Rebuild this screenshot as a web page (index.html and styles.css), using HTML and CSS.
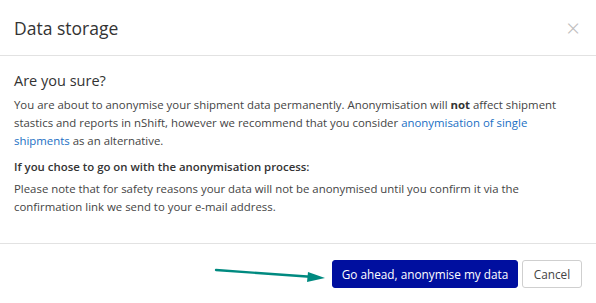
FILE: index.html
```html
<!DOCTYPE html>
<html>
<head>
<meta charset="utf-8">
<link rel="stylesheet" href="styles.css">
</head>
<body>
<div class="modal">
  <div class="modal-header">
    <h1 class="modal-title">Data storage</h1>
    <span class="close">&times;</span>
  </div>
  <div class="modal-body">
    <h2 class="subtitle">Are you sure?</h2>
    <p class="text">You are about to anonymise your shipment data permanently. Anonymisation will <b>not</b> affect shipment stastics and reports in nShift, however we recommend that you consider <a class="link">anonymisation of single shipments</a> as an alternative.</p>
    <p class="text-bold">If you chose to go on with the anonymisation process:</p>
    <p class="text">Please note that for safety reasons your data will not be anonymised until you confirm it via the confirmation link we send to your e-mail address.</p>
  </div>
  <div class="modal-footer">
    <svg class="arrow" width="112" height="16" viewBox="0 0 112 16">
      <line x1="2" y1="3" x2="100" y2="10" stroke="#008a80" stroke-width="2.4" stroke-linecap="round"/>
      <polygon points="111,11 94,5 93,15" fill="#008a80"/>
    </svg>
    <button class="btn btn-primary">Go ahead, anonymise my data</button>
    <button class="btn btn-default">Cancel</button>
  </div>
</div>
</body>
</html>
```
FILE: styles.css
```css
html, body {
  margin: 0;
  padding: 0;
  background: #fff;
}
body {
  font-family: "Open Sans", "Noto Sans", sans-serif;
  color: #444;
  width: 596px;
  height: 303px;
  overflow: hidden;
}
.modal {
  display: flex;
  flex-direction: column;
}
.modal-header {
  display: flex;
  align-items: center;
  justify-content: space-between;
  height: 55px;
  padding: 0 16px 0 14px;
  border-bottom: 1px solid #e2e2e2;
}
.modal-title {
  margin: 0;
  font-size: 17.5px;
  font-weight: 400;
  color: #333;
}
.close {
  font-size: 24px;
  color: #bdbdbd;
  line-height: 1;
  font-weight: 300;
}
.modal-body {
  padding: 14px 34px 27px 14px;
  border-bottom: 1px solid #e2e2e2;
}
.subtitle {
  margin: 0 0 4px 0;
  font-size: 14.5px;
  font-weight: 400;
  color: #333;
  line-height: 22px;
}
.text {
  margin: 0;
  font-size: 11.4px;
  line-height: 18px;
}
.text b {
  font-weight: 700;
  color: #333;
}
.link {
  color: #1a6fc4;
  text-decoration: none;
}
.text-bold {
  margin: 8px 0 4px 0;
  font-size: 11.4px;
  line-height: 18px;
  font-weight: 600;
  color: #333;
}
.modal-footer {
  display: flex;
  justify-content: flex-end;
  align-items: center;
  gap: 4px;
  padding: 16px 14px 0 0;
}
.arrow {
  margin-right: 2px;
  margin-top: 2px;
}
.btn {
  font-family: inherit;
  font-size: 11.8px;
  height: 28px;
  border-radius: 3px;
  padding: 0;
  white-space: nowrap;
  cursor: pointer;
}
.btn-primary {
  background: #000f9f;
  color: #fff;
  border: 1px solid #000f9f;
  width: 186px;
}
.btn-default {
  background: #fff;
  color: #444;
  border: 1px solid #cfcfcf;
  width: 60px;
}
```
